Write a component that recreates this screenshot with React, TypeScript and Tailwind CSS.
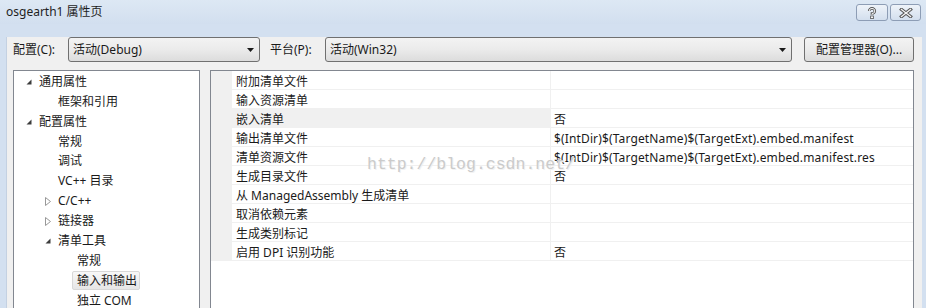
import React from "react"

const treeItems: { label: string; level: number; icon?: "open" | "closed"; selected?: boolean }[] = [
  { label: "通用属性", level: 1, icon: "open" },
  { label: "框架和引用", level: 2 },
  { label: "配置属性", level: 1, icon: "open" },
  { label: "常规", level: 2 },
  { label: "调试", level: 2 },
  { label: "VC++ 目录", level: 2 },
  { label: "C/C++", level: 2, icon: "closed" },
  { label: "链接器", level: 2, icon: "closed" },
  { label: "清单工具", level: 2, icon: "open" },
  { label: "常规", level: 3 },
  { label: "输入和输出", level: 3, selected: true },
  { label: "独立 COM", level: 3 },
]

const props: { name: string; value: string; active?: boolean }[] = [
  { name: "附加清单文件", value: "" },
  { name: "输入资源清单", value: "" },
  { name: "嵌入清单", value: "否", active: true },
  { name: "输出清单文件", value: "$(IntDir)$(TargetName)$(TargetExt).embed.manifest" },
  { name: "清单资源文件", value: "$(IntDir)$(TargetName)$(TargetExt).embed.manifest.res" },
  { name: "生成目录文件", value: "否" },
  { name: "从 ManagedAssembly 生成清单", value: "" },
  { name: "取消依赖元素", value: "" },
  { name: "生成类别标记", value: "" },
  { name: "启用 DPI 识别功能", value: "否" },
]

function Arrow() {
  return (
    <svg width="7" height="4" viewBox="0 0 7 4">
      <polygon points="0,0 7,0 3.5,4" fill="#1a1a1a" />
    </svg>
  )
}

function Expander({ kind }: { kind?: "open" | "closed" }) {
  if (kind === "open")
    return (
      <svg width="6" height="6" viewBox="0 0 6 6" className="mt-[1px]">
        <polygon points="5.5,0.5 5.5,5.5 0.5,5.5" fill="#3c3c3c" />
      </svg>
    )
  if (kind === "closed")
    return (
      <svg width="6" height="9" viewBox="0 0 6 9">
        <polygon points="0.5,0.5 5.5,4.5 0.5,8.5" fill="white" stroke="#989898" />
      </svg>
    )
  return null
}

function Combo({ text, width }: { text: string; width: string }) {
  return (
    <div
      className={`${width} h-[25px] flex items-center justify-between pl-[4px] pr-[5px] border border-[#707070] rounded-[3px] bg-gradient-to-b from-[#f3f3f3] via-[#ebebeb] to-[#dcdcdc]`}
    >
      <span>{text}</span>
      <Arrow />
    </div>
  )
}

export default function App() {
  return (
    <div className="relative w-[926px] h-[308px] overflow-hidden bg-[#d3e0f0] text-[12px] text-[#1a1a1a] font-['Noto_Sans','Noto_Sans_CJK_SC',sans-serif]">
      {/* title bar */}
      <div className="h-[24px] flex justify-between pl-[6px] pr-[5px] bg-gradient-to-b from-[#dde8f4] to-[#d2dfef]">
        <span className="leading-[24px] text-[#1e1e1e]">osgearth1 属性页</span>
        <div className="flex gap-[2px] mt-[4px]">
          <div className="w-[32px] h-[17px] flex items-center justify-center border border-[#8d9db5] rounded-[3px] bg-gradient-to-b from-[#eef3f9] to-[#d3dfee]">
            <svg width="10" height="12" viewBox="0 0 10 12">
              <path d="M2.2 4 A2.8 2.6 0 1 1 5 6.6 V8" fill="none" stroke="#555" strokeWidth="2.6" />
              <path d="M2.2 4 A2.8 2.6 0 1 1 5 6.6 V8" fill="none" stroke="#f4f4f4" strokeWidth="1" />
              <rect x="3.6" y="9" width="2.8" height="2.6" fill="#f4f4f4" stroke="#555" strokeWidth="0.8" />
            </svg>
          </div>
          <div className="w-[31px] h-[17px] flex items-center justify-center border border-[#8d9db5] rounded-[3px] bg-gradient-to-b from-[#eef3f9] to-[#d3dfee]">
            <svg width="14" height="10" viewBox="0 0 14 10">
              <path d="M2.5 1.5 L11.5 8.5 M11.5 1.5 L2.5 8.5" stroke="#555" strokeWidth="3.4" strokeLinecap="square" />
              <path d="M2.5 1.5 L11.5 8.5 M11.5 1.5 L2.5 8.5" stroke="#f4f4f4" strokeWidth="1.4" strokeLinecap="square" />
            </svg>
          </div>
        </div>
      </div>

      {/* dialog body */}
      <div className="ml-[6px] mr-[4px] h-[284px] bg-[#f0f0f0] border-l border-[#c4d1e2]">
        <div className="flex items-center h-[25px] mt-[13px] pl-[6px]">
          <span className="w-[55px]">配置(C):</span>
          <Combo text="活动(Debug)" width="w-[192px]" />
          <span className="w-[55px] ml-[10px]">平台(P):</span>
          <Combo text="活动(Win32)" width="w-[467px]" />
          <div className="ml-[12px] w-[110px] h-[25px] flex items-center justify-center border border-[#707070] rounded-[3px] bg-gradient-to-b from-[#f3f3f3] via-[#ebebeb] to-[#dcdcdc]">
            配置管理器(O)...
          </div>
        </div>

        <div className="flex mt-[8px] pl-[6px] gap-[10px] h-[260px]">
          {/* tree */}
          <div className="w-[187px] border border-[#828790] bg-white pt-[1px]">
            {treeItems.map((it, i) => (
              <div
                key={i}
                className="h-[19.88px] flex items-center"
                style={{ paddingLeft: 12 + (it.level - 1) * 19 }}
              >
                <span className="w-[13px] flex items-center">
                  <Expander kind={it.icon} />
                </span>
                {it.selected ? (
                  <span className="ml-[-5px] pl-[4px] pr-[2px] h-[19px] flex items-center border border-[#d8d8d8] rounded-[2px] bg-gradient-to-b from-[#f8f8f8] to-[#e6e6e6]">
                    {it.label}
                  </span>
                ) : (
                  <span>{it.label}</span>
                )}
              </div>
            ))}
          </div>

          {/* property grid */}
          <div className="w-[704px] border border-[#828790] bg-white">
            {props.map((p, i) => (
              <div key={i} className="flex h-[19px]">
                <div className="w-[21px] bg-[#f0f0f0]" />
                <div
                  className={`w-[319px] pl-[4px] pt-[3px] flex items-center border-b border-r border-[#f0f0f0] ${p.active ? "bg-[#f0f0f0]" : ""}`}
                >
                  {p.name}
                </div>
                <div className="flex-1 pl-[3px] pt-[3px] flex items-center border-b border-[#f0f0f0] tracking-[0.14px]">
                  {p.value}
                </div>
              </div>
            ))}
          </div>
        </div>
      </div>

      {/* csdn watermark */}
      <div className="absolute left-[367px] top-[153px] text-[16.5px] text-[#cbcbcb] font-['Liberation_Mono',monospace] [text-shadow:1px_1px_0_#f2f2f2]">
        http://blog.csdn.net/
      </div>
    </div>
  )
}
